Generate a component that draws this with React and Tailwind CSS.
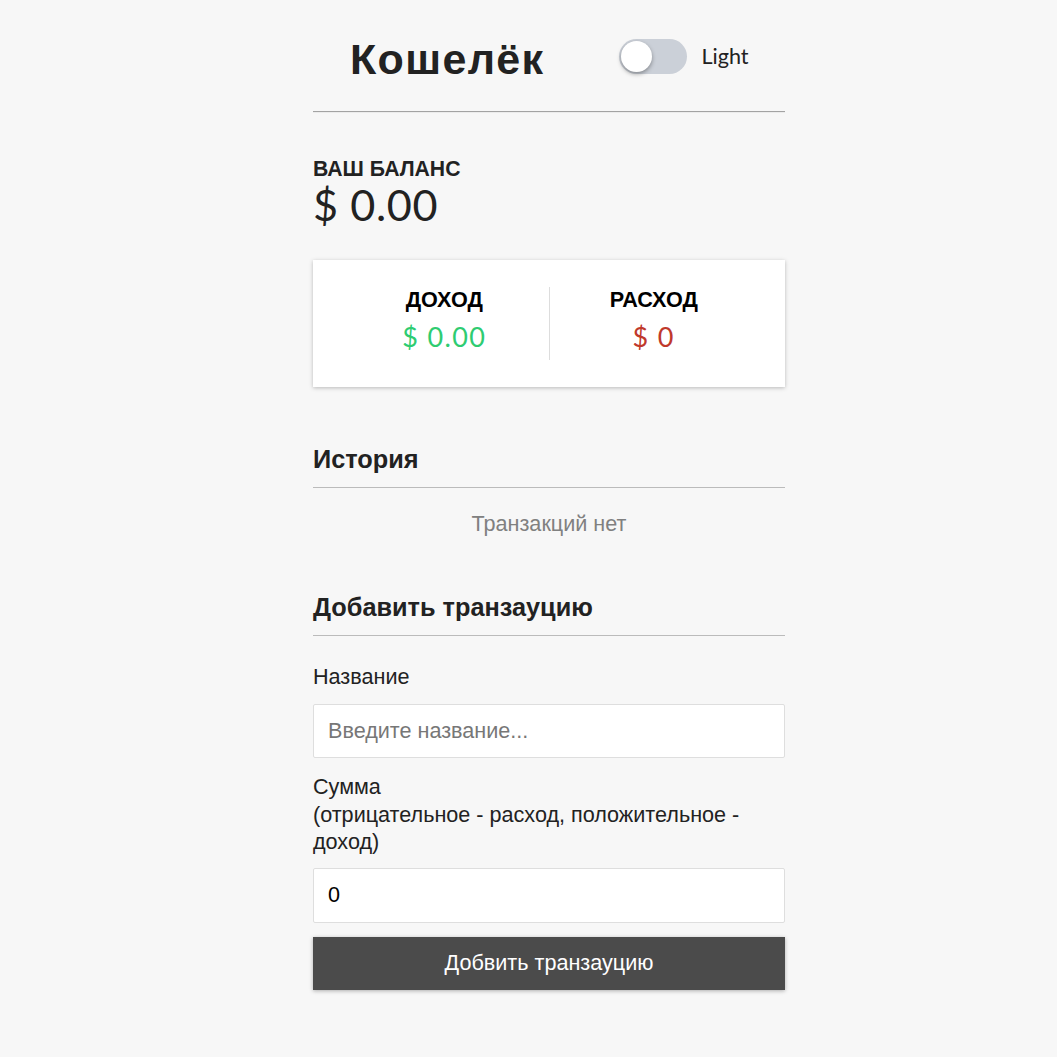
const AR = { fontFamily: "'Liberation Sans', Arial, sans-serif" };
const LT = { fontFamily: "Lato, 'Liberation Sans', sans-serif" };

export default function App() {
  return (
    <div className="min-h-[1057px] w-full bg-[#f7f7f7] text-[#222]" style={AR}>
      <div className="ml-[313px] w-[472px] pt-[34px]">
        <div className="flex items-center h-[50px]">
          <h1 className="ml-[37px] text-[43px] font-bold tracking-[1.35px] leading-[50px] text-[#222]" style={AR}>Кошелёк</h1>
          <div className="ml-[75px] flex items-center -mt-[6px]">
            <div className="relative w-[68px] h-[35px] rounded-full bg-[#cbd0d8]">
              <div className="absolute left-[2px] top-[2px] w-[31px] h-[31px] rounded-full bg-white shadow-[0_2px_4px_rgba(0,0,0,0.35)]"></div>
            </div>
            <span className="ml-[14px] text-[21.6px] text-[#222]" style={LT}>Light</span>
          </div>
        </div>
        <div className="mt-[27px] border-t border-[#a3a3a3] border-b border-b-[#ececec]"></div>

        <h4 className="mt-[45px] text-[21.2px] font-bold uppercase leading-[21px]">Ваш баланс</h4>
        <div className="mt-[1px] text-[43.2px] leading-[48px] tracking-[0.6px]" style={LT}>$ 0.00</div>

        <div className="mt-[32px] bg-white shadow-[0_1px_4px_rgba(0,0,0,0.25)] h-[127px] flex items-center px-[27px]">
          <div className="flex-1 h-[73px] flex flex-col items-center">
            <div className="text-[21.6px] font-bold uppercase text-black leading-[25px]">Доход</div>
            <div className="mt-[9px] text-[27px] text-[#2ecc71] leading-[32px] tracking-[1.35px]" style={LT}>$ 0.00</div>
          </div>
          <div className="w-px h-[73px] bg-[#dddddd]"></div>
          <div className="flex-1 h-[73px] flex flex-col items-center">
            <div className="text-[21.6px] font-bold uppercase text-black leading-[25px]">Расход</div>
            <div className="mt-[9px] text-[27px] text-[#c0392b] leading-[32px] tracking-[1.35px]" style={LT}>$ 0</div>
          </div>
        </div>

        <h3 className="mt-[58px] text-[25.3px] font-bold leading-[29px] pb-[13px] border-b border-[#bbbbbb]">История</h3>
        <div className="mt-[23px] text-center text-[21.6px] text-[#808080] leading-[25px]">Транзакций нет</div>

        <h3 className="mt-[57px] text-[25.3px] font-bold leading-[29px] pb-[13px] border-b border-[#bbbbbb]">Добавить транзауцию</h3>

        <form className="text-[21.6px]">
          <label className="block mt-[28px] leading-[25px] text-[#222]">Название</label>
          <input
            type="text"
            placeholder="Введите название..."
            className="mt-[15px] block w-full h-[54px] bg-white border border-[#dedede] rounded-[2px] px-[14px] text-[21.6px] placeholder:text-[#777] outline-none"
          />
          <label className="block mt-[15px] leading-[27.5px] text-[#222]">
            Сумма <br />(отрицательное - расход, положительное - доход)
          </label>
          <input
            type="number"
            defaultValue="0"
            className="mt-[12px] block w-full h-[55px] bg-white border border-[#dedede] rounded-[2px] px-[14px] text-[21.6px] text-black outline-none"
          />
          <button
            type="button"
            className="mt-[14px] block w-full h-[53px] bg-[#4b4b4b] text-white text-[21.6px] shadow-[0_1px_4px_rgba(0,0,0,0.3)]"
          >
            Добвить транзауцию
          </button>
        </form>
      </div>
    </div>
  );
}
